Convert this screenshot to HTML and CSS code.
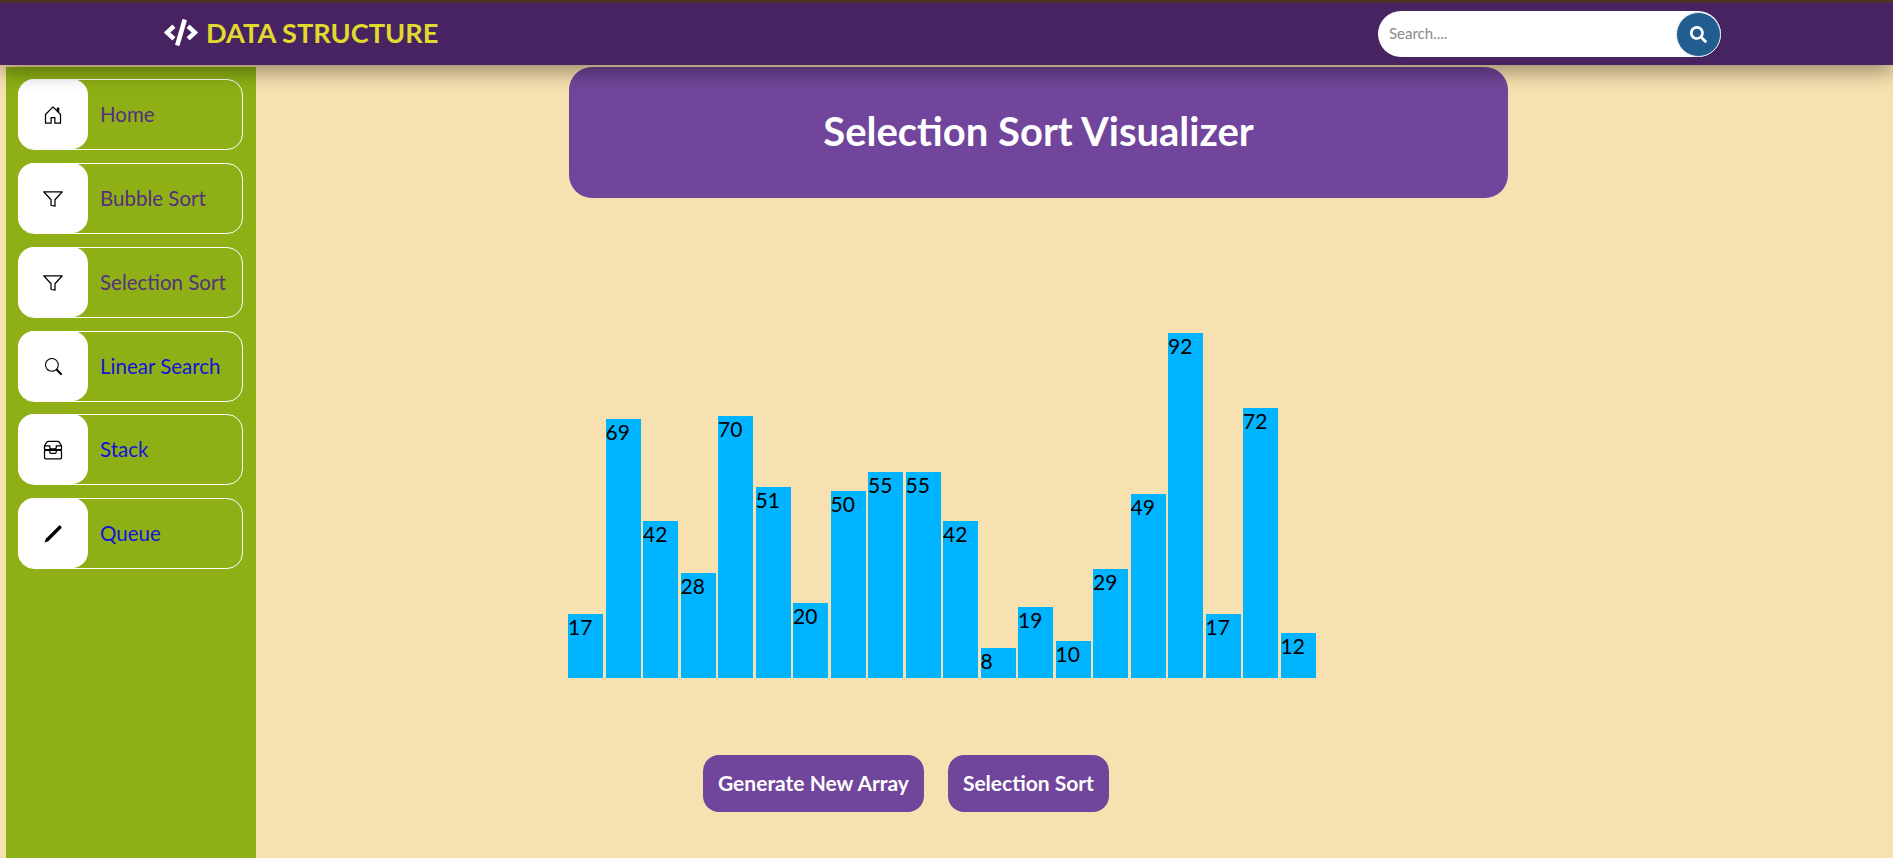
FILE: index.html
```html
<!DOCTYPE html>
<html lang="en">
<head>
    <meta charset="UTF-8">
    <title>Selection Sort Visualizer</title>
    <link rel="stylesheet" href="styles.css">
</head>
<body>
<nav class="navbar">
    <a class="brand" href="#">
        <svg class="brand-icon" viewBox="0 0 640 512"><path d="M278.9 511.5l-61-17.7c-6.4-1.8-10-8.5-8.2-14.9L346.2 8.7c1.8-6.4 8.5-10 14.9-8.2l61 17.7c6.4 1.8 10 8.5 8.2 14.9L293.8 503.3c-1.9 6.4-8.5 10.1-14.9 8.2zm-114-112.2l43.5-46.4c4.6-4.9 4.3-12.7-.8-17.2L117 256l90.6-79.7c5.1-4.5 5.5-12.3.8-17.2l-43.5-46.4c-4.5-4.8-12.1-5.1-17-.5L3.8 247.2c-5.1 4.7-5.1 12.8 0 17.5l144.1 135.1c4.9 4.6 12.5 4.4 17-.5zm327.2.6l144.1-135.1c5.1-4.7 5.1-12.8 0-17.5L492.1 112.1c-4.8-4.5-12.4-4.3-17 .5L431.6 159c-4.6 4.9-4.3 12.7.8 17.2L523 256l-90.6 79.7c-5.1 4.5-5.5 12.3-.8 17.2l43.5 46.4c4.5 4.9 12.1 5.1 17 .6z"/></svg>
        <span>DATA STRUCTURE</span>
    </a>
    <form class="search">
        <input class="search-input" type="text" placeholder="Search....">
        <button class="search-btn" type="button">
            <svg viewBox="0 0 512 512"><path d="M505 442.7L405.3 343c-4.5-4.5-10.6-7-17-7H372c27.6-35.3 44-79.7 44-128C416 93.1 322.9 0 208 0S0 93.1 0 208s93.1 208 208 208c48.3 0 92.7-16.4 128-44v16.3c0 6.4 2.5 12.5 7 17l99.7 99.7c9.4 9.4 24.6 9.4 33.9 0l28.3-28.3c9.4-9.4 9.4-24.6.1-34zM208 336c-70.7 0-128-57.2-128-128 0-70.7 57.2-128 128-128 70.7 0 128 57.2 128 128 0 70.7-57.2 128-128 128z"/></svg>
        </button>
    </form>
</nav>

<div class="layout">
    <aside class="sidebar">
        <a class="side-link visited" href="#">
            <span class="side-icon"><svg viewBox="0 0 16 16"><path d="M8.354 1.146a.5.5 0 0 0-.708 0l-6 6A.5.5 0 0 0 1.5 7.5v7a.5.5 0 0 0 .5.5h4.5a.5.5 0 0 0 .5-.5v-4h2v4a.5.5 0 0 0 .5.5H14a.5.5 0 0 0 .5-.5v-7a.5.5 0 0 0-.146-.354L13 5.793V2.5a.5.5 0 0 0-.5-.5h-1a.5.5 0 0 0-.5.5v1.293L8.354 1.146zM2.5 14V7.707l5.5-5.5 5.5 5.5V14H10v-4a.5.5 0 0 0-.5-.5h-3a.5.5 0 0 0-.5.5v4H2.5z"/></svg></span>
            <span>Home</span>
        </a>
        <a class="side-link visited" href="#">
            <span class="side-icon"><svg viewBox="0 0 16 16"><path class="line" d="M.6 2.2h14.8L9.6 8.6v5.1L6.9 13.2 6.4 12.6V8.6z"/></svg></span>
            <span>Bubble Sort</span>
        </a>
        <a class="side-link visited" href="#">
            <span class="side-icon"><svg viewBox="0 0 16 16"><path class="line" d="M.6 2.2h14.8L9.6 8.6v5.1L6.9 13.2 6.4 12.6V8.6z"/></svg></span>
            <span>Selection Sort</span>
        </a>
        <a class="side-link" href="#">
            <span class="side-icon"><svg class="small" viewBox="0 0 16 16"><path d="M11.742 10.344a6.5 6.5 0 1 0-1.397 1.398h-.001c.03.04.062.078.098.115l3.85 3.85a1 1 0 0 0 1.415-1.414l-3.85-3.85a1.007 1.007 0 0 0-.115-.1zM12 6.5a5.5 5.5 0 1 1-11 0 5.5 5.5 0 0 1 11 0z"/></svg></span>
            <span>Linear Search</span>
        </a>
        <a class="side-link" href="#">
            <span class="side-icon"><svg viewBox="0 0 16 16"><path class="line" d="M1.2 7.6V4.6L2.9 1.9Q3.4 1 4.4 1H11.6Q12.6 1 13.1 1.9L14.8 4.6V7.6ZM1.2 4.6H5.4V6Q5.4 7 6.4 7H9.6Q10.6 7 10.6 6V4.6H14.8M2.2 8.2H13.8Q14.8 8.2 14.8 9.2V14Q14.8 15 13.8 15H2.2Q1.2 15 1.2 14V9.2Q1.2 8.2 2.2 8.2ZM5.4 8.4V9.6Q5.4 10.6 6.4 10.6H9.6Q10.6 10.6 10.6 9.6V8.4"/></svg></span>
            <span>Stack</span>
        </a>
        <a class="side-link" href="#">
            <span class="side-icon"><svg viewBox="0 0 16 16"><path d="M12.7 1.4c.4-.4.9-.4 1.3 0l.6.6c.4.4.4.9 0 1.3L4.2 13.7 1.2 14.8 2.3 11.8z"/></svg></span>
            <span>Queue</span>
        </a>
    </aside>

    <main class="content">
        <h1 class="title">Selection Sort Visualizer</h1>

        <div class="chart">
            <div class="bar" style="height:63.75px">17</div>
            <div class="bar" style="height:258.75px">69</div>
            <div class="bar" style="height:157.5px">42</div>
            <div class="bar" style="height:105px">28</div>
            <div class="bar" style="height:262.5px">70</div>
            <div class="bar" style="height:191.25px">51</div>
            <div class="bar" style="height:75px">20</div>
            <div class="bar" style="height:187.5px">50</div>
            <div class="bar" style="height:206.25px">55</div>
            <div class="bar" style="height:206.25px">55</div>
            <div class="bar" style="height:157.5px">42</div>
            <div class="bar" style="height:30px">8</div>
            <div class="bar" style="height:71.25px">19</div>
            <div class="bar" style="height:37.5px">10</div>
            <div class="bar" style="height:108.75px">29</div>
            <div class="bar" style="height:183.75px">49</div>
            <div class="bar" style="height:345px">92</div>
            <div class="bar" style="height:63.75px">17</div>
            <div class="bar" style="height:270px">72</div>
            <div class="bar" style="height:45px">12</div>
        </div>

        <div class="actions">
            <button class="btn" type="button">Generate New Array</button>
            <button class="btn" type="button">Selection Sort</button>
        </div>
    </main>
</div>
</body>
</html>
```

FILE: styles.css
```css
* { margin: 0; padding: 0; box-sizing: border-box; }
html, body { height: 100%; overflow: hidden; }
body {
    background-color: #f8e1b0;
    font-family: "Lato", "Noto Sans", sans-serif;
}
a { text-decoration: none; }

/* top bar */
.navbar {
    height: 65px;
    background-color: #472362;
    border-top: 3px solid #4f3228;
    padding: 0 172px 0 164px;
    display: flex;
    align-items: center;
    justify-content: space-between;
    box-shadow: 0 8px 18px rgba(0, 0, 0, 0.35);
    position: relative;
    z-index: 2;
}
.brand {
    display: flex;
    align-items: center;
    gap: 8px;
    color: #e0d92e;
    font-size: 27.2px;
    line-height: 30px;
    font-weight: 700;
    padding-bottom: 3px;
}
.brand-icon {
    width: 34px;
    height: 27px;
    fill: #fff;
}
.search {
    width: 343px;
    height: 46px;
    display: flex;
    align-items: center;
    background-color: #fff;
    border-radius: 23px;
}
.search-input {
    flex: 1;
    min-width: 0;
    height: 100%;
    border: none;
    outline: none;
    background: none;
    padding: 0 0 2px 11px;
    font-family: inherit;
    font-size: 15px;
}
.search-input::placeholder { color: #8a8a8a; }
.search-btn {
    width: 45px;
    height: 45px;
    flex: none;
    border: 1px solid #dfe6ec;
    border-radius: 50%;
    background-color: #215e8f;
    display: flex;
    align-items: center;
    justify-content: center;
}
.search-btn svg {
    width: 17px;
    height: 17px;
    fill: #fff;
}

/* page body */
.layout {
    height: calc(100% - 67px);
    margin-top: 2px;
    display: flex;
}
.sidebar {
    width: 250px;
    flex: none;
    margin-left: 6px;
    padding: 12px 13px 0 12px;
    background-color: #8eb016;
}
.side-link {
    height: 71px;
    margin-bottom: 12.85px;
    border: 1px solid #fff;
    border-radius: 16px;
    display: flex;
    align-items: center;
    font-size: 20.5px;
    color: #1414d8;
}
.side-link span:last-child { padding-bottom: 1px; }
.side-link.visited { color: #55307c; }
.side-icon {
    width: 70px;
    height: 70px;
    flex: none;
    margin: -1px 12px 0 -1px;
    padding-top: 2px;
    background-color: #fff;
    border-radius: 16px;
    display: flex;
    align-items: center;
    justify-content: center;
}
.side-icon svg {
    width: 20px;
    height: 20px;
    fill: #000;
}
.side-icon svg.small {
    width: 17px;
    height: 17px;
}
.side-icon .line {
    fill: none;
    stroke: #000;
    stroke-width: 1;
    stroke-linejoin: round;
}

.content {
    flex: 1;
    padding-left: 313px;
}
.title {
    width: 939px;
    height: 131px;
    padding-bottom: 3px;
    background-color: #71459b;
    border-radius: 23px;
    color: #fff;
    font-size: 40px;
    font-weight: 700;
    display: flex;
    align-items: center;
    justify-content: center;
}
.chart {
    height: 350px;
    margin-top: 130px;
    margin-left: -1px;
    display: flex;
    align-items: flex-end;
    gap: 2.5px;
}
.bar {
    width: 35px;
    flex: none;
    background-color: #00b4ff;
    color: #000;
    font-size: 21px;
    line-height: 25px;
}
.actions {
    margin-top: 77px;
    margin-left: 134px;
    display: flex;
    gap: 24px;
}
.btn {
    height: 57px;
    padding: 0 15px 2px;
    border: none;
    border-radius: 16px;
    background-color: #71459b;
    color: #fff;
    font-family: inherit;
    font-size: 21px;
    font-weight: 700;
}
```
